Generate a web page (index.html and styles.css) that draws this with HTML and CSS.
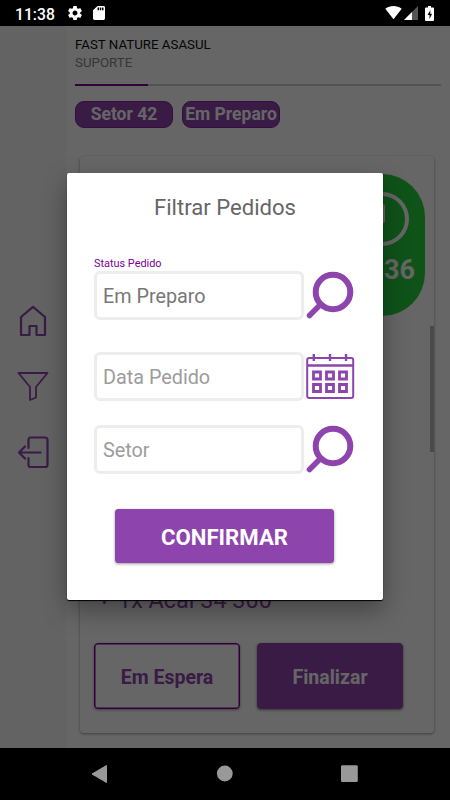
FILE: index.html
```html
<!DOCTYPE html>
<html lang="pt-BR">
<head>
    <meta charset="UTF-8">
    <meta name="viewport" content="width=device-width, initial-scale=1.0">
    <title>Filtrar Pedidos</title>
    <link rel="stylesheet" href="styles.css">
</head>
<body>

<header class="status-bar">
    <span class="clock">11:38</span>
    <svg class="gear" width="14" height="14" viewBox="2 2 20 20"><path fill="#fff" d="M19.43 12.98c.04-.32.07-.64.07-.98s-.03-.66-.07-.98l2.11-1.65c.19-.15.24-.42.12-.64l-2-3.46c-.12-.22-.39-.3-.61-.22l-2.49 1c-.52-.4-1.08-.73-1.69-.98l-.38-2.65C14.46 2.18 14.25 2 14 2h-4c-.25 0-.46.18-.49.42l-.38 2.65c-.61.25-1.17.59-1.69.98l-2.49-1c-.23-.09-.49 0-.61.22l-2 3.46c-.13.22-.07.49.12.64l2.11 1.65c-.04.32-.07.65-.07.98s.03.66.07.98l-2.11 1.65c-.19.15-.24.42-.12.64l2 3.46c.12.22.39.3.61.22l2.49-1c.52.4 1.08.73 1.69.98l.38 2.65c.03.24.24.42.49.42h4c.25 0 .46-.18.49-.42l.38-2.65c.61-.25 1.17-.59 1.69-.98l2.49 1c.23.09.49 0 .61-.22l2-3.46c.12-.22.07-.49-.12-.64l-2.11-1.65zM12 15.5c-1.93 0-3.5-1.57-3.5-3.5s1.57-3.5 3.5-3.5 3.5 1.57 3.5 3.5-1.57 3.5-3.5 3.5z"/></svg>
    <svg class="sd" width="12" height="14" viewBox="4 2 16 20" preserveAspectRatio="none"><path fill="#fff" d="M18 2h-8L4.02 8 4 20c0 1.1.9 2 2 2h12c1.1 0 2-.9 2-2V4c0-1.1-.9-2-2-2zm-6 6h-2V4h2v4zm3 0h-2V4h2v4zm3 0h-2V4h2v4z"/></svg>
    <div class="status-right">
        <svg width="17" height="14" viewBox="0 0 17 14"><path fill="#fff" d="M.3 2.800C5 -.800 12 -.800 16.700 2.800L8.500 13.300z"/></svg>
        <svg class="signal" width="14" height="14" viewBox="0 0 14 14"><path fill="#555" d="M14 0v14H0z"/><path fill="#fff" d="M8 6v8H0z"/></svg>
        <svg class="battery" width="9" height="15" viewBox="0 0 9 15"><path fill="#fff" d="M1 1.500h2V0h3v1.500h2q1 0 1 1V14q0 1-1 1H1q-1 0-1-1V2.500q0-1 1-1z"/><path fill="#000" d="M5.500 4L2.500 9h2v4l2.600-5.300H5.200z"/></svg>
    </div>
</header>

<div class="app">
    <aside class="sidebar">
        <svg width="32" height="34" viewBox="0 0 32 34"><path d="M4 13L16 2.800l12 10.200V31h-8.500v-9h-7v9H4z"/></svg>
        <svg class="funnel" width="32" height="34" viewBox="0 0 32 34"><path d="M1.500 3h29L19 17v10.500l-6 2.500V17z"/></svg>
        <svg width="32" height="34" viewBox="0 0 32 34"><path d="M11.500 12V4q0-2.500 2-2.500H28q2.500 0 2.500 2.500v25q0 2-2.500 2H13.500q-2 0-2-2V22M23.500 16.500H2M8 10.500l-6 6 6 6"/></svg>
    </aside>

    <main class="content">
        <div class="company">FAST NATURE ASASUL</div>
        <div class="user">SUPORTE</div>
        <div class="progress"><div class="progress-fill"></div></div>
        <div class="chips">
            <span class="chip">Setor 42</span>
            <span class="chip">Em Preparo</span>
        </div>
        <section class="order">
            <div class="timer">
                <svg width="56" height="56" viewBox="0 0 56 56"><circle cx="28" cy="28" r="25" fill="none" stroke="#fff" stroke-width="4"/><path d="M29 15v15" fill="none" stroke="#fff" stroke-width="4" stroke-linecap="round"/></svg>
                <span>:36</span>
            </div>
            <div class="order-bottom">
                <p class="item"><span class="dot">•</span>1x Acai 34 300</p>
                <div class="actions">
                    <button class="btn btn-outline">Em Espera</button>
                    <button class="btn">Finalizar</button>
                </div>
            </div>
        </section>
        <div class="scrollbar"></div>
    </main>

    <div class="overlay">
        <form class="modal">
            <h2>Filtrar Pedidos</h2>
            <label>Status Pedido</label>
            <div class="row">
                <div class="field filled">Em Preparo</div>
                <svg width="50" height="50" viewBox="0 0 50 50"><circle cx="27" cy="21" r="17.300" fill="none" stroke="#8e44ad" stroke-width="6"/><path d="M14.500 33.500L3.500 44.500" stroke="#8e44ad" stroke-width="5.500" stroke-linecap="round"/></svg>
            </div>
            <div class="row row-date">
                <div class="field">Data Pedido</div>
                <svg width="50" height="50" viewBox="0 0 50 50" fill="none" stroke="#8e44ad">
                    <rect x="1.200" y="6" width="46" height="40" rx="2" stroke-width="2"/>
                    <path d="M1 13.500H47M7.800 2v7M24 2v7M40 2v7" stroke-width="2.400"/>
                    <path d="M7.500 20h7v7h-7zM20.500 20h7v7h-7zM33.500 20h7v7h-7zM7.500 32.500h7v7h-7zM20.500 32.500h7v7h-7zM33.500 32.500h7v7h-7z" stroke-width="2.800"/>
                </svg>
            </div>
            <div class="row row-sector">
                <div class="field">Setor</div>
                <svg width="50" height="50" viewBox="0 0 50 50"><circle cx="27" cy="21" r="17.300" fill="none" stroke="#8e44ad" stroke-width="6"/><path d="M14.500 33.500L3.500 44.500" stroke="#8e44ad" stroke-width="5.500" stroke-linecap="round"/></svg>
            </div>
            <button type="button" class="confirm">CONFIRMAR</button>
        </form>
    </div>
</div>

<nav class="nav-bar">
    <svg width="18" height="20" viewBox="0 0 18 20"><path fill="#999" d="M1 10L15.500 1.500V18.500z" stroke="#999" stroke-linejoin="round"/></svg>
    <svg width="18" height="20" viewBox="0 0 18 20"><circle cx="8.800" cy="9.500" r="7.900" fill="#999"/></svg>
    <svg width="18" height="20" viewBox="0 0 18 20"><rect x="1" y="1.200" width="16.800" height="16.800" rx="1.200" fill="#999"/></svg>
</nav>

</body>
</html>
```
FILE: styles.css
```css
:root {
    --primary: #8e44ad;
    --primary-dark: #7b0099;
}

* {
    margin: 0;
    padding: 0;
    box-sizing: border-box;
}

body {
    width: 450px;
    height: 800px;
    display: flex;
    flex-direction: column;
    overflow: hidden;
    font-family: Roboto, sans-serif;
    background: #000;
}

svg {
    display: block;
    flex: none;
}

/* Status bar */
.status-bar {
    height: 26px;
    display: flex;
    align-items: center;
    padding: 0 16px 0 15px;
    color: #fff;
}

.clock {
    font-size: 15.7px;
    font-weight: 500;
    width: 53px;
    padding-top: 2px;
}

.sd {
    margin-left: 11px;
}

.status-right {
    display: flex;
    align-items: center;
    margin-left: auto;
}

.signal {
    margin-left: 2px;
}

.battery {
    margin-left: 7px;
}

/* App */
.app {
    position: relative;
    height: 722px;
    display: flex;
    background: #fff;
}

.sidebar {
    width: 66px;
    background: #f7f7f7;
    display: flex;
    flex-direction: column;
    gap: 32px;
    padding: 278px 0 0 17px;
}

.sidebar svg {
    fill: none;
    stroke: var(--primary);
    stroke-width: 2.2;
    stroke-linejoin: round;
    stroke-linecap: round;
}

.sidebar .funnel {
    stroke-width: 1.8;
}

.content {
    position: relative;
    flex: 1;
    padding: 10px 9px 0;
}

.company, .user {
    font-size: 13.3px;
    line-height: 18px;
    color: #111;
}

.user {
    color: #888;
}

.progress {
    height: 2px;
    margin-top: 12px;
    background: #ccc;
}

.progress-fill {
    width: 73px;
    height: 2px;
    background: var(--primary-dark);
}

.chips {
    display: flex;
    gap: 9px;
    margin-top: 15px;
}

.chip {
    width: 98px;
    height: 27px;
    border: 1px solid #84229f;
    border-radius: 9px;
    background: var(--primary);
    color: #fff;
    font-size: 17.5px;
    font-weight: 700;
    text-align: center;
    line-height: 24px;
    white-space: nowrap;
}

.order {
    display: flex;
    flex-direction: column;
    height: 577px;
    margin: 28px 7px 0 5px;
    padding: 18px 9px 24px 14px;
    border-radius: 4px;
    box-shadow: 0 1px 3px rgba(0, 0, 0, 0.4);
}

.timer {
    align-self: flex-end;
    width: 86px;
    height: 142px;
    padding: 17px 10px 0 15px;
    border-radius: 43px;
    background: #27d03f;
    color: #fff;
    font-size: 27px;
    font-weight: 700;
    text-align: right;
}

.timer span {
    display: block;
    margin-top: 7px;
}

.order-bottom {
    margin-top: auto;
}

.item {
    padding-left: 8px;
    color: var(--primary);
    font-size: 23.4px;
    line-height: 30px;
}

.dot {
    display: inline-block;
    width: 16px;
    font-size: 14px;
}

.actions {
    display: flex;
    gap: 17px;
    margin-top: 25px;
}

.btn {
    width: 146px;
    height: 66px;
    padding-top: 2px;
    border: 1px solid var(--primary);
    border-radius: 4px;
    background: var(--primary);
    color: #fff;
    font: 700 19.5px Roboto, sans-serif;
    box-shadow: 0 1px 3px rgba(0, 0, 0, 0.5);
}

.btn-outline {
    border-color: var(--primary-dark);
    background: #fff;
    color: var(--primary);
    box-shadow: inset 0 0 0 .5px var(--primary-dark), 0 1px 3px rgba(0, 0, 0, 0.4);
}

.scrollbar {
    position: absolute;
    right: 16px;
    top: 300px;
    width: 4px;
    height: 126px;
    background: #b8b8b8;
}

/* Filter dialog */
.overlay {
    position: absolute;
    inset: 0;
    display: flex;
    justify-content: center;
    align-items: flex-start;
    padding-top: 147px;
    background: rgba(0, 0, 0, 0.6);
}

.modal {
    display: flex;
    flex-direction: column;
    width: 316px;
    height: 427px;
    padding: 20px 27px 0 27px;
    border-radius: 2px;
    background: #fff;
    box-shadow: 0 1px 1px #000, 0 10px 24px rgba(0, 0, 0, 0.35);
}

.modal h2 {
    color: #666;
    font-size: 22.1px;
    font-weight: 400;
    line-height: 28px;
    text-align: center;
}

.modal label {
    margin-top: 35px;
    color: var(--primary-dark);
    font-size: 10.9px;
    line-height: 15px;
}

.row {
    display: flex;
    gap: 2px;
    height: 50px;
}

.row-date {
    margin-top: 31px;
}

.row-sector {
    margin-top: 23px;
}

.field {
    width: 210px;
    height: 49px;
    border: 3px solid #ededed;
    border-radius: 6px;
    padding-left: 6px;
    color: #9c9c9c;
    font-size: 19.8px;
    line-height: 45px;
}

.filled {
    color: #777;
}

.confirm {
    width: 219px;
    height: 54px;
    margin: 34px 0 0 21px;
    padding-top: 2px;
    border: 1px solid var(--primary);
    border-radius: 3px;
    background: var(--primary);
    color: #fff;
    font: 700 22.2px Roboto, sans-serif;
    box-shadow: 0 1px 3px rgba(0, 0, 0, 0.4);
}

/* Android navigation */
.nav-bar {
    height: 52px;
    display: flex;
    align-items: center;
    justify-content: space-between;
    padding: 0 92px 0 91px;
}
```
